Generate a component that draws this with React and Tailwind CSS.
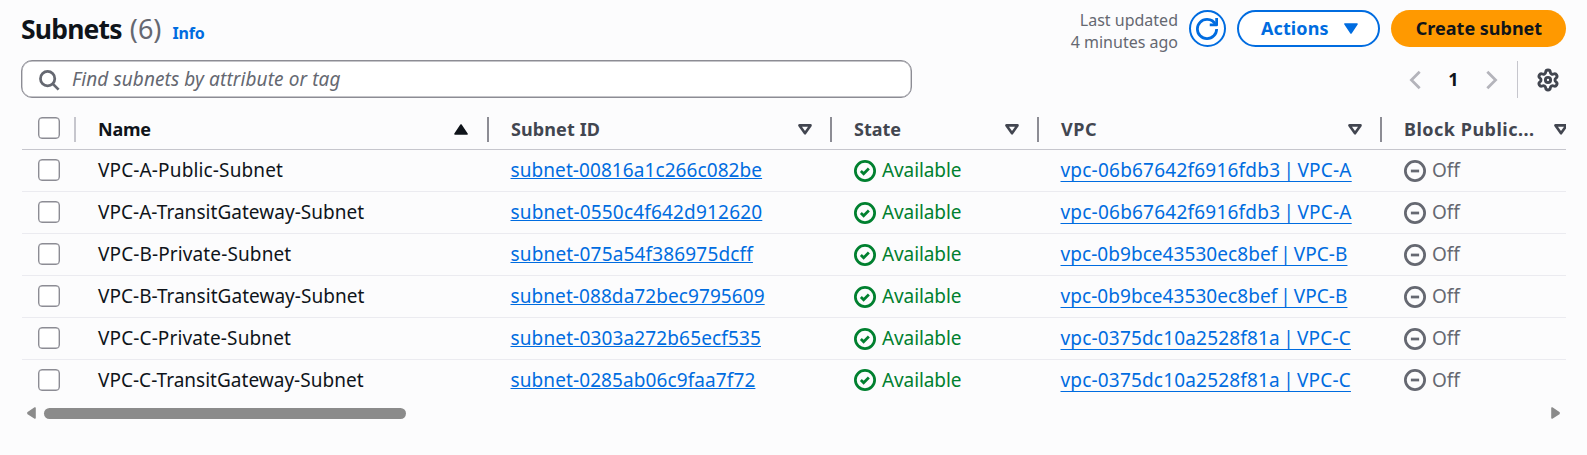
import React from "react";

const rows = [
  { name: "VPC-A-Public-Subnet", nameText: "tracking-[0.14px]", subnet: "subnet-00816a1c266c082be", subnetText: "tracking-[0.08px]", vpc: "vpc-06b67642f6916fdb3 | VPC-A", vpcText: "tracking-[0.22px] [word-spacing:-1.9px]" },
  { name: "VPC-A-TransitGateway-Subnet", nameText: "tracking-[0.04px]", subnet: "subnet-0550c4f642d912620", subnetText: "tracking-[0.18px]", vpc: "vpc-06b67642f6916fdb3 | VPC-A", vpcText: "tracking-[0.22px] [word-spacing:-1.9px]" },
  { name: "VPC-B-Private-Subnet", nameText: "tracking-[0.12px]", subnet: "subnet-075a54f386975dcff", subnetText: "tracking-[0.16px]", vpc: "vpc-0b9bce43530ec8bef | VPC-B", vpcText: "tracking-[0.06px] [word-spacing:-2px]" },
  { name: "VPC-B-TransitGateway-Subnet", nameText: "tracking-[0.04px]", subnet: "subnet-088da72bec9795609", subnetText: "tracking-[0.08px]", vpc: "vpc-0b9bce43530ec8bef | VPC-B", vpcText: "tracking-[0.06px] [word-spacing:-2px]" },
  { name: "VPC-C-Private-Subnet", nameText: "tracking-[0.12px]", subnet: "subnet-0303a272b65ecf535", subnetText: "tracking-[0.14px]", vpc: "vpc-0375dc10a2528f81a | VPC-C", vpcText: "tracking-[0.18px] [word-spacing:-1.9px]" },
  { name: "VPC-C-TransitGateway-Subnet", nameText: "tracking-[0.02px]", subnet: "subnet-0285ab06c9faa7f72", subnetText: "tracking-[0.1px]", vpc: "vpc-0375dc10a2528f81a | VPC-C", vpcText: "tracking-[0.18px] [word-spacing:-1.9px]" },
];

const columns = [
  { label: "Name", text: "text-[#0f141a] tracking-[-0.25px]", sorted: true },
  { label: "Subnet ID", text: "text-[#424650] tracking-[0.1px]" },
  { label: "State", text: "text-[#424650]" },
  { label: "VPC", text: "text-[#424650] tracking-[0.5px]" },
  { label: "Block Public...", text: "text-[#424650] tracking-[0.5px]", last: true },
];

const GRID = "grid grid-cols-[54px_413px_343px_207px_343px_184px]";

function Icon({ children, className = "" }) {
  return (
    <svg viewBox="0 0 16 16" fill="none" stroke="currentColor" strokeWidth="2" className={`size-[22px] shrink-0 ${className}`}>
      {children}
    </svg>
  );
}

function Checkbox() {
  return <span className="block size-[22px] rounded-[4px] border border-[#8c8c94] bg-white shadow-[inset_0_0_0_0.4px_#8c8c94]" />;
}

function Triangle({ up, hollow, className = "" }) {
  return (
    <svg viewBox="0 0 14 11" className={`h-[11px] w-[14px] shrink-0 ${up ? "rotate-180" : ""} ${className}`}>
      <path
        d={hollow ? "M1.5 1.4h11L7 9.3z" : "M1 1h12L7 10z"}
        fill={hollow ? "none" : "currentColor"}
        stroke="currentColor"
        strokeWidth={hollow ? 2.6 : 1.6}
        strokeLinejoin="round"
      />
    </svg>
  );
}

function Header() {
  return (
    <div className="flex h-[60px] items-start justify-between">
      <div className="-ml-px flex items-baseline pt-[9px] leading-[40px]">
        <h1 className="text-[26.5px] font-bold tracking-[-0.8px] text-[#0f141a]">Subnets</h1>
        <span className="ml-[8px] text-[27px] text-[#656871]">(6)</span>
        <a className="ml-[11px] text-[16px] font-bold tracking-[-0.2px] text-[#006ce0]">Info</a>
      </div>
      <div className="flex pt-[10px]">
        <div className="-mt-px text-right text-[16px] leading-[22px] text-[#656871]">
          Last updated
          <br />4 minutes ago
        </div>
        <button className="ml-[11px] flex size-[37px] items-center justify-center rounded-full border-2 border-[#006ce0] bg-white text-[#006ce0]">
          <Icon className="-ml-px">
            <path d="M10 5h5V0" strokeLinejoin="round" />
            <path d="M15 8a6.957 6.957 0 0 1-7 7 6.957 6.957 0 0 1-7-7 6.957 6.957 0 0 1 7-7 6.87 6.87 0 0 1 6.3 4" />
          </Icon>
        </button>
        <button className="ml-[11px] flex h-[37px] w-[143px] items-center rounded-full border-2 border-[#006ce0] bg-white pl-[22px] text-[18px] font-bold tracking-[0.1px] text-[#006ce0]">
          Actions
          <Triangle className="ml-[15px]" />
        </button>
        <button className="ml-[11px] h-[37px] w-[175px] rounded-full bg-[#ff9900] pl-px text-[18px] font-bold text-[#0f141a]">
          Create subnet
        </button>
      </div>
    </div>
  );
}

function Toolbar() {
  return (
    <div className="flex h-[38px] items-center justify-between">
      <div className="flex h-[38px] w-[891px] items-center rounded-[11px] border border-[#8c8c94] bg-white pl-[16px] pt-px text-[#656871] shadow-[inset_0_0_0_0.4px_#8c8c94]">
        <Icon>
          <circle cx="7" cy="7" r="5.2" />
          <path d="m10.8 10.8 4.2 4.2" />
        </Icon>
        <span className="ml-[12px] text-[19px] italic tracking-[0.1px]">Find subnets by attribute or tag</span>
      </div>
      <div className="flex h-full items-center pt-px">
        <Icon className="text-[#b4b4bb]">
          <path d="m11.4 2-6 6 6 6" />
        </Icon>
        <span className="w-[55px] text-center text-[18px] font-bold text-[#0f141a]">1</span>
        <Icon className="text-[#b4b4bb]">
          <path d="m4.6 2 6 6-6 6" />
        </Icon>
        <span className="ml-[14px] h-[37px] w-px bg-[#c6c6cd]" />
        <svg viewBox="0 0 24 24" fill="none" stroke="currentColor" strokeWidth="2.9" className="ml-[18px] mr-[6px] size-[24px] text-[#424650]">
          <path d="M9.671 4.136a2.34 2.34 0 0 1 4.659 0 2.34 2.34 0 0 0 3.319 1.915 2.34 2.34 0 0 1 2.33 4.033 2.34 2.34 0 0 0 0 3.831 2.34 2.34 0 0 1-2.33 4.033 2.34 2.34 0 0 0-3.319 1.915 2.34 2.34 0 0 1-4.659 0 2.34 2.34 0 0 0-3.32-1.915 2.34 2.34 0 0 1-2.33-4.033 2.34 2.34 0 0 0 0-3.831A2.34 2.34 0 0 1 6.35 6.051a2.34 2.34 0 0 0 3.319-1.915" />
          <circle cx="12" cy="12" r="2.6" />
        </svg>
      </div>
    </div>
  );
}

function Table() {
  return (
    <div className="mt-[12px] w-[1544px] overflow-hidden">
      <div className={`${GRID} h-[40px] border-b border-[#c6c6cd]`}>
        <div className="flex items-start justify-between pl-4 pt-[7px]">
          <Checkbox />
          <span className="h-[25px] w-[2px] bg-[#c6c6cd]" />
        </div>
        {columns.map((c) => (
          <div key={c.label} className={`flex items-center pl-[22px] text-[18px] font-bold ${c.text}`}>
            <span className="whitespace-nowrap">{c.label}</span>
            {c.sorted ? <Triangle up className="ml-auto" /> : <Triangle hollow className={c.last ? "-mr-[2px] ml-auto" : "ml-auto"} />}
            {!c.last && <span className={`h-[25px] w-[2px] bg-[#8c8c94] ${c.sorted ? "ml-[19px]" : "ml-[18px]"}`} />}
          </div>
        ))}
      </div>
      {rows.map((r, i) => (
        <div
          key={r.name}
          className={`${GRID} items-center text-[19px] whitespace-nowrap text-[#0f141a] ${i < 5 ? "h-[42px] border-b border-[#ebebf0]" : "h-[40px]"}`}
        >
          <div className="pb-px pl-4">
            <Checkbox />
          </div>
          <div className={`pl-[22px] ${r.nameText}`}>{r.name}</div>
          <div className="pl-[21.5px]">
            <a className={`text-[#006ce0] underline decoration-1 underline-offset-1 [text-decoration-skip-ink:none] ${r.subnetText}`}>{r.subnet}</a>
          </div>
          <div className="flex items-center gap-[6px] pl-[22px] text-[#00802f]">
            <Icon>
              <circle cx="8" cy="8" r="7" />
              <path d="m5 8 2 2 3.8-3.8" />
            </Icon>
            <span className="tracking-[-0.1px]">Available</span>
          </div>
          <div className="pl-[21.5px]">
            <a className={`text-[#006ce0] underline decoration-1 underline-offset-4 [text-decoration-skip-ink:none] ${r.vpcText}`}>{r.vpc}</a>
          </div>
          <div className="flex items-center gap-[6px] pl-[22px] text-[#656871]">
            <Icon>
              <circle cx="8" cy="8" r="7" />
              <path d="M11 8H5" />
            </Icon>
            Off
          </div>
        </div>
      ))}
    </div>
  );
}

function Scrollbar() {
  return (
    <div className="mt-[7px] flex h-[12px] w-[1544px] items-center pl-[5px] pr-[6px] text-[#8b8b8b]">
      <svg viewBox="0 0 9 12" className="h-[12px] w-[9px]">
        <path d="M8 1v10L1 6.6v-1z" fill="currentColor" stroke="currentColor" strokeWidth="1.6" strokeLinejoin="round" />
      </svg>
      <span className="ml-[8px] h-[11px] w-[362px] rounded-full bg-[#8b8b8b]" />
      <svg viewBox="0 0 9 12" className="ml-auto h-[12px] w-[9px]">
        <path d="M1 1v10l7-4.4v-1z" fill="currentColor" stroke="currentColor" strokeWidth="1.6" strokeLinejoin="round" />
      </svg>
    </div>
  );
}

export default function App() {
  return (
    <div className="h-[455px] w-[1587px] overflow-hidden bg-[#fcfcfd] pl-[22px] font-['Noto_Sans',sans-serif]">
      <div className="w-[1544px]">
        <Header />
        <div className="-ml-px">
          <Toolbar />
        </div>
        <Table />
        <Scrollbar />
      </div>
    </div>
  );
}
